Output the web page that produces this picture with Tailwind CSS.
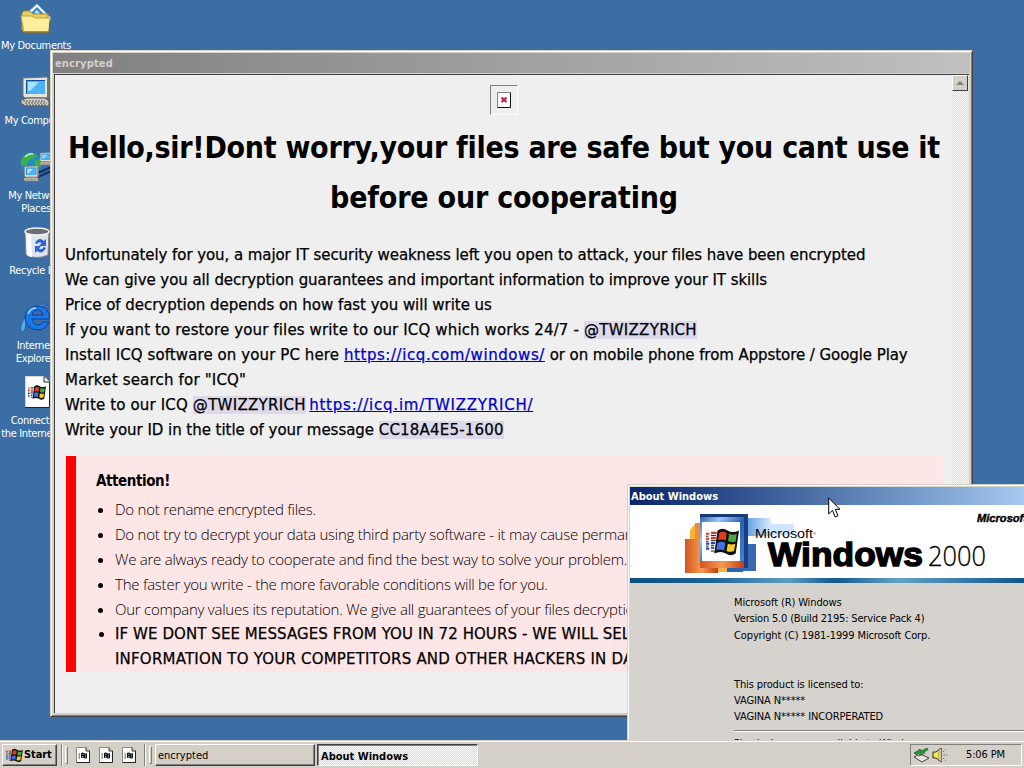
<!DOCTYPE html>
<html lang="en">
<head>
    <meta charset="UTF-8">
    <meta name="viewport" content="width=device-width, initial-scale=1.0">
    <title>Desktop</title>
    <script src="https://cdn.jsdelivr.net/npm/@tailwindcss/browser@4"></script>
    <style>
        body {
            font-family: "DejaVu Sans Condensed", "DejaVu Sans", sans-serif;
        }
        .wide {
            font-family: "DejaVu Sans", sans-serif;
        }
        /* checkerboard used by scrollbar tracks and pressed buttons */
        .dither {
            background: repeating-conic-gradient(#fff 0 25%, #dcd9d3 0 50%) 0 0 / 2px 2px;
        }
    </style>
</head>
<body class="w-[1024px] h-[768px] overflow-hidden bg-[#3a6ea5] relative text-[11px] text-black">

    <!-- Shared symbols -->
    <svg class="hidden">
        <symbol id="flag" viewBox="0 0 20 18">
            <path d="M7 2Q10 0 13 2Q16 4 20 2L18 16Q15 18 12 16Q9 14 5 16Z" fill="#111"/>
            <path d="M8 3.500Q10.500 2 12.500 3.500L12 8Q9.500 7 7.300 8Z" fill="#e03a20"/>
            <path d="M14 4Q16 5.200 18.600 4.200L18 8.700Q15.500 9.500 13.400 8.400Z" fill="#4aa848"/>
            <path d="M7 9.500Q9.500 8.200 11.700 9.500L11 14Q8.500 13 6.200 14Z" fill="#3f6fe0"/>
            <path d="M13.200 10Q15.500 11 17.800 10L17 14.500Q14.700 15.500 12.500 14.400Z" fill="#f5cc28"/>
            <path d="M0 4H2M3 3.500H6.500M0 7H2M3 6.500H6" stroke="#d04030" stroke-width="1.300"/>
            <path d="M0 10H2M3 9.500H5.500M0 13H2M3 12.500H5" stroke="#2a3fb0" stroke-width="1.300"/>
            <path d="M0 5.500H1.500M3 5H6M0 8.500H1.500M3 8H6M0 11.500H1.500M3 11H5M3 14.500H5" stroke="#111" stroke-width=".6"/>
        </symbol>
        <symbol id="page" viewBox="0 0 14 16">
            <path d="M.5.5H10L13.500 4V15.500H.5Z" fill="#fff" stroke="#8a8a86"/>
            <path d="M13.500 4V15.500H.5" fill="none" stroke="#222"/>
            <path d="M10 .5V4H13.500" fill="#ccc" stroke="#333"/>
            <path d="M5 6Q7 5 8 6T11 6V11Q9 12 8 11T5 11Z" fill="#111"/>
            <path d="M6.200 7.500H7.500M6 9.700H7.500M9 8H10M9 10H10" stroke="#ccc" stroke-width=".8"/>
            <path d="M2.500 7H4M2.500 9H4M2.500 11H4" stroke="#333"/>
        </symbol>
        <symbol id="monitor" viewBox="0 0 32 32">
            <path d="M3 2L27 1L29 3V21L26 22H5L3 20Z" fill="#e6e3da" stroke="#77756d"/>
            <path d="M27 2L29 3V21L27 22Z" fill="#77746c"/>
            <rect x="6" y="4" width="19" height="14" fill="#0b4ea0"/>
            <rect x="7" y="5" width="18" height="13" fill="#4bb4f4"/>
            <path d="M8 6H19L10 15H8Z" fill="#a5e3ff"/>
            <path d="M7 22H25L29 25V30H5L1 27V24Z" fill="#d2cfc5" stroke="#55534e"/>
            <path d="M3 25H25M5 27H27M6 29H27" stroke="#55534e" stroke-dasharray="2 1"/>
        </symbol>
    </svg>

    <!-- Desktop icons -->
    <div class="absolute left-0 top-0 w-[72px] h-[450px] text-white leading-[13px] text-center tracking-[-0.33px]">
        <div class="flex flex-col items-center h-[75px] pt-[4px]">
            <svg class="w-8 h-8" viewBox="0 0 32 32">
                <path d="M7 9L17 0L31 14L24 20Z" fill="#f3f8ff" stroke="#9fb7cc"/>
                <path d="M11 9L17 3L25 11L20 14Z" fill="#3487c8"/>
                <path d="M14 9L17 6L21 11Z" fill="#c4ecff"/>
                <path d="M2 9L4 7H10L13 10H28V28H4L2 26Z" fill="#e8cf62" stroke="#a98b2c"/>
                <path d="M1 12H12L15 14H30L29 28H4Z" fill="#fbee9c" stroke="#c0a544"/>
                <path d="M4 28H29L30 17" fill="none" stroke="#6d5a1c"/>
            </svg>
            <div class="mt-[3px]">My Documents</div>
        </div>
        <div class="flex flex-col items-center h-[75px] pt-[1px]">
            <svg class="w-8 h-8"><use href="#monitor"/></svg>
            <div class="mt-[6px]">My Computer</div>
        </div>
        <div class="flex flex-col items-center h-[75px] pt-[1px]">
            <svg class="w-8 h-8" viewBox="0 0 32 32">
                <circle cx="11" cy="12" r="10.500" fill="#1d8fc4"/>
                <path d="M3 6Q9 0 16 3L13 8L9 9L6 15L1 14Q0 10 3 6ZM14 10L21 8V15L16 17Z" fill="#3fae49"/>
                <path d="M5 6Q9 2 13 3" fill="none" stroke="#b9f0c4" stroke-width="1.500"/>
                <path d="M18 22L31 16M18 26L31 20" stroke="#122c66" stroke-width="2"/>
                <svg x="19" y="1" width="14" height="14"><use href="#monitor"/></svg>
                <svg x="3" y="14" width="17" height="18"><use href="#monitor"/></svg>
            </svg>
            <div class="mt-[6px] w-[62px]">My Network Places</div>
        </div>
        <div class="flex flex-col items-center h-[75px] pt-[1px]">
            <svg class="w-8 h-8" viewBox="0 0 32 32">
                <path d="M5 6L6 29Q17 34 28 29L29 6Z" fill="#dfe4ec" stroke="#80848c"/>
                <path d="M6 8L7 29Q9 31 12 31L11 9Z" fill="#fff"/>
                <ellipse cx="17" cy="5.500" rx="12" ry="3.500" fill="#6c6e76" stroke="#f2f2f2" stroke-width="1.500"/>
                <path d="M15 17Q19 10 24 15L26 13V20H19L21.500 17.500Q19 15 17 18ZM26 22Q22 29 17 25L15 27V20H21L19 22.500Q21 24.500 24 21Z" fill="#2b62d9"/>
            </svg>
            <div class="mt-[6px]">Recycle Bin</div>
        </div>
        <div class="flex flex-col items-center h-[75px] pt-[1px]">
            <svg class="w-8 h-8" viewBox="0 0 32 32">
                <path d="M1 30Q-1 22 9 12Q20 1 29 3Q20 4 11 13Q5 20 5 28Q3 32 1 30Z" fill="#55aef0" stroke="#1453a8" stroke-width=".7"/>
                <path d="M17 5Q29 5 30 18H12Q13 24 18 24Q21 24 23 21H29Q26 29 17 29Q6 28 5 17Q6 6 17 5ZM12 14H23Q22 9 17.500 9Q13 9 12 14Z" fill="#1878e6" stroke="#0c3d9b"/>
                <path d="M8 13Q10 7 16 7" fill="none" stroke="#7fd0ff" stroke-width="2"/>
            </svg>
            <div class="mt-[6px] mr-[2px] w-[50px]">Internet Explorer</div>
        </div>
        <div class="flex flex-col items-center h-[75px] pt-[1px]">
            <svg class="w-8 h-8" viewBox="0 0 32 32">
                <path d="M5.500.5H24L29.500 6V31.500H5.500Z" fill="#fff" stroke="#d5d5d0"/>
                <path d="M24 .5V6H29.500V31.500H5" fill="none" stroke="#222"/>
                <svg x="8" y="8" width="18" height="17"><use href="#flag"/></svg>
            </svg>
            <div class="mt-[6px] w-[72px] whitespace-nowrap">Connect to<br><span class="mr-[15px]">the Internet</span></div>
        </div>
    </div>

    <!-- Ransom note window -->
    <div class="absolute left-[50px] top-[50px] w-[923px] h-[667px] bg-[#d4d0c8] border border-[#d4d0c8] border-r-[#404040] border-b-[#404040] shadow-[inset_1px_1px_#fff,inset_-1px_-1px_#808080] p-[2px] flex flex-col">
        <div class="h-[20px] shrink-0 bg-linear-to-r from-[#808080] to-[#c0c0c0] text-[#d4d0c8] font-bold leading-[21px] pl-[2px] tracking-[0.15px]">encrypted</div>
        <div class="flex-1 min-h-0 mt-px mx-px mb-px border-t border-l border-[#404040] bg-[#efefef] flex">
            <div class="flex-1 min-w-0 wide text-[15px] leading-[25px] pl-[10px] pr-[10px]">
                <div class="flex justify-center pt-[10px]">
                    <div class="w-[28px] h-[30px] border border-[#808080] border-r-white border-b-white flex items-center justify-center">
                        <svg class="w-[14px] h-[16px]" viewBox="0 0 14 16">
                            <path d="M.5.5H13.500V15.500H.5Z" fill="#fff" stroke="#808080"/>
                            <path d="M13.500.5V15.500H.5" fill="none" stroke="#111"/>
                            <path d="M4.500 5.500L9.500 10M9.500 5.500L4.500 10" stroke="#c01840" stroke-width="2"/>
                        </svg>
                    </div>
                </div>
                <h1 class="mt-[8px] pl-px text-center text-[30px] leading-[50px] font-bold font-[DejaVu_Sans_Condensed] whitespace-nowrap tracking-[-0.28px]">Hello,sir!Dont worry,your files are safe but you cant use it<br><span class="tracking-[-0.2px]">before our cooperating</span></h1>
                <div class="mt-[20px] whitespace-nowrap tracking-[-0.073px] [-webkit-text-stroke:0.25px_currentColor]">
                    <p>Unfortunately for you, a major IT security weakness left you open to attack, your files have been encrypted</p>
                    <p>We can give you all decryption guarantees and important information to improve your IT skills</p>
                    <p class="tracking-[-0.03px]">Price of decryption depends on how fast you will write us</p>
                    <p class="tracking-[0.137px]">If you want to restore your files write to our ICQ which works 24/7 - <span class="bg-[#dcdaea] tracking-[0.3px]">@TWIZZYRICH</span></p>
                    <p><span class="tracking-[0.095px]">Install ICQ software on your PC here </span><a class="text-[#0000c8] underline tracking-[0.57px]">https://icq.com/windows/</a> or on mobile phone from Appstore / Google Play</p>
                    <p class="tracking-[0.19px]">Market search for "ICQ"</p>
                    <p class="tracking-[0.15px]">Write to our ICQ <span class="bg-[#dcdaea] tracking-[0.3px]">@TWIZZYRICH</span><span class="tracking-[-1.5px]"> </span><a class="text-[#0000c8] underline tracking-[0.77px]">https://icq.im/TWIZZYRICH/</a></p>
                    <p class="tracking-[-0.04px]">Write your ID in the title of your message <span class="bg-[#dcdaea] tracking-[0.2px]">CC18A4E5-1600</span></p>
                </div>
                <div class="mt-[13px] ml-px -mr-px h-[216px] border-l-[10px] border-[#f00] bg-[#ffe6e6] pl-[20px] pt-[13px] whitespace-nowrap overflow-hidden">
                    <p class="font-semibold font-[DejaVu_Sans_Condensed] tracking-[-0.42px]">Attention!</p>
                    <ul class="mt-[3px] list-disc pl-[19px] font-[Open_Sans] font-light marker:text-[15px] tracking-[-0.24px]">
                        <li>Do not rename encrypted files.</li>
                        <li>Do not try to decrypt your data using third party software - it may cause permanent data loss.</li>
                        <li>We are always ready to cooperate and find the best way to solve your problem.</li>
                        <li>The faster you write - the more favorable conditions will be for you.</li>
                        <li>Our company values its reputation. We give all guarantees of your files decryption.</li>
                        <li class="wide font-normal tracking-[0.08px] [-webkit-text-stroke:0.25px_currentColor]">IF WE DONT SEE MESSAGES FROM YOU IN 72 HOURS - WE WILL SELL<br><span class="tracking-[0.2px]">INFORMATION TO YOUR COMPETITORS AND OTHER HACKERS IN DARKNET</span></li>
                    </ul>
                </div>
            </div>
            <div class="w-[17px] dither">
                <div class="w-[16px] h-[16px] bg-[#d4d0c8] border border-white border-r-[#404040] border-b-[#404040] flex items-center justify-center">
                    <svg class="w-[8px] h-[4px]" viewBox="0 0 8 4"><path d="M4 0L8 4H0Z" fill="#808080"/></svg>
                </div>
            </div>
        </div>
    </div>

    <!-- About Windows -->
    <div class="absolute left-[627px] top-[484px] w-[397px] h-[256px] overflow-hidden bg-[#d6d3ce] border-t border-l border-[#d4d0c8] shadow-[inset_1px_1px_#fff] pt-[2px] pl-[2px]">
        <div class="h-[18px] bg-linear-to-r from-[#0a246a] to-[#a6caf0] text-white font-bold leading-[19px] pl-[1px]">About Windows</div>
        <svg class="block w-[394px] h-[78px]" viewBox="630 505 394 78">
            <defs>
                <linearGradient id="blue" x1="0" y1="0" x2="1" y2="1">
                    <stop offset="0" stop-color="#2458a4"/><stop offset=".25" stop-color="#9cc8f2"/>
                    <stop offset=".5" stop-color="#2c62b0"/><stop offset="1" stop-color="#4b8ad8"/>
                </linearGradient>
                <linearGradient id="orange" x1="0" y1="0" x2="1" y2="0">
                    <stop offset="0" stop-color="#d4551b"/><stop offset=".5" stop-color="#f39a55"/><stop offset="1" stop-color="#c93c10"/>
                </linearGradient>
                <linearGradient id="sky"><stop offset="0" stop-color="#6ba2e2"/><stop offset="1" stop-color="#d9ecff"/></linearGradient>
                <linearGradient id="strip">
                    <stop offset="0" stop-color="#0d4f80"/><stop offset=".2" stop-color="#1b6496"/><stop offset=".4" stop-color="#5f9cc2"/>
                    <stop offset=".52" stop-color="#12588a"/><stop offset=".68" stop-color="#64a2c8"/><stop offset="1" stop-color="#0d5688"/>
                </linearGradient>
            </defs>
            <rect x="630" y="505" width="394" height="73" fill="#fff"/>
            <rect x="630" y="578" width="394" height="5" fill="url(#strip)"/>
            <rect x="748" y="518" width="23" height="18" fill="url(#sky)"/>
            <rect x="768" y="524" width="26" height="11" fill="#cfe5fb"/>
            <rect x="738" y="544" width="18" height="27" fill="#3768b0"/>
            <path d="M690 541V530L695 524L700 530V541Z" fill="#f9b233"/>
            <rect x="695" y="523" width="8" height="20" fill="#ee8a3a"/>
            <rect x="685" y="539" width="33" height="34" fill="url(#orange)"/>
            <rect x="718" y="566" width="9" height="6" fill="#f6b540"/>
            <rect x="727" y="564" width="16" height="8" fill="#2c62b0"/>
            <rect x="700" y="514" width="48" height="54" fill="url(#blue)"/>
            <path d="M700 514H748V517H700Z" fill="#17387c"/>
            <path d="M700 561H744V568H700Z" fill="url(#orange)"/>
            <path d="M744 514H748V568H744Z" fill="#173f88"/>
            <rect x="702" y="522" width="38" height="39" fill="#fff"/>
            <svg x="706" y="527" width="33" height="30"><use href="#flag"/></svg>
            <text x="755" y="538" font-family="Liberation Sans" font-size="13.500" textLength="58" lengthAdjust="spacingAndGlyphs">Microsoft</text>
            <text x="813" y="535" font-family="Liberation Sans" font-size="4">®</text>
            <text x="768" y="566" font-family="Liberation Sans" font-weight="700" font-size="34" textLength="155" lengthAdjust="spacingAndGlyphs" stroke="#000" stroke-width="1.400">Windows</text>
            <text x="928" y="566" font-family="Open Sans" font-weight="300" font-size="28" textLength="58" lengthAdjust="spacingAndGlyphs" stroke="#000" stroke-width=".3">2000</text>
            <text x="977" y="522" font-family="Liberation Sans" font-weight="700" font-style="italic" font-size="10.500" textLength="50" lengthAdjust="spacingAndGlyphs" stroke="#000" stroke-width=".4">Microsoft</text>
        </svg>
        <div class="ml-[104px] pt-[12px] leading-[16.300px] tracking-[-0.12px] whitespace-nowrap">
            <p>Microsoft (R) Windows</p>
            <p class="tracking-[-0.18px]">Version 5.0 (Build 2195: Service Pack 4)</p>
            <p>Copyright (C) 1981-1999 Microsoft Corp.</p>
            <p class="mt-[33px]">This product is licensed to:</p>
            <p>VAGINA N*****</p>
            <p>VAGINA N***** INCORPERATED</p>
            <div class="mt-[4px] h-[2px] bg-[#808080] border-b border-white"></div>
            <p class="mt-[4px]">Physical memory available to Windows:</p>
        </div>
    </div>

    <!-- Mouse pointer -->
    <svg class="absolute left-[828px] top-[497px] w-[13px] h-[22px]" viewBox="0 0 13 22">
        <path d="M.7 1V17L4.500 13.300L7.200 20L10 18.800L7.300 12.300H12Z" fill="#fff" stroke="#000"/>
    </svg>

    <!-- Taskbar -->
    <div class="absolute left-0 top-[740px] w-full h-[28px] bg-[#d4d0c8] border-t border-[#d4d0c8] shadow-[inset_0_1px_#fff] pt-[3px] pb-[2px] pl-[2px] pr-[2px] flex">
        <div class="w-[55px] h-[22px] border border-white border-r-[#404040] border-b-[#404040] shadow-[inset_-1px_-1px_#808080] flex items-center pl-[3px] font-bold tracking-[-0.1px]">
            <svg class="w-[17px] h-[15px] mr-[1px]"><use href="#flag"/></svg>Start
        </div>
        <div class="ml-[4px] w-[2px] h-[22px] border-l border-[#808080] border-r border-r-white"></div>
        <div class="ml-[2px] w-[3px] h-[18px] mt-[2px] border border-white border-r-[#808080] border-b-[#808080]"></div>
        <div class="ml-[8px] flex gap-[9px] mt-[3px]">
            <svg class="w-[14px] h-[16px]"><use href="#page"/></svg>
            <svg class="w-[14px] h-[16px]"><use href="#page"/></svg>
            <svg class="w-[14px] h-[16px]"><use href="#page"/></svg>
        </div>
        <div class="ml-[8px] w-[2px] h-[22px] border-l border-[#808080] border-r border-r-white"></div>
        <div class="ml-[3px] w-[3px] h-[18px] mt-[2px] border border-white border-r-[#808080] border-b-[#808080]"></div>
        <div class="ml-[3px] w-[160px] h-[22px] border border-white border-r-[#404040] border-b-[#404040] shadow-[inset_-1px_-1px_#808080] leading-[21px] pl-[2px]">encrypted</div>
        <div class="ml-[2px] w-[161px] h-[22px] dither border border-[#404040] border-r-white border-b-white shadow-[inset_1px_1px_#808080] leading-[23px] pl-[3px] font-bold">About Windows</div>
        <div class="ml-auto w-[112px] h-[22px] border border-[#808080] border-r-white border-b-white flex items-center pl-[2px]">
            <svg class="w-[17px] h-[16px]" viewBox="0 0 17 16">
                <path d="M1 10L7 7L16 11L9 15Z" fill="#e8e8e4" stroke="#444"/>
                <path d="M1 6L7 3L12 6L6 9Z" fill="#c9ccd0" stroke="#555"/>
                <path d="M14 1L8 4L7 2L2 6L9 8L8.500 6L15 3Z" fill="#1da035" stroke="#0b5c1b" stroke-width=".6"/>
            </svg>
            <svg class="w-[17px] h-[16px] ml-[2px]" viewBox="0 0 17 16">
                <path d="M1 5H4L9 1V15L4 11H1Z" fill="#f4ec4e" stroke="#333"/>
                <path d="M7 3L9 1V15L7 13Z" fill="#fffbd0" stroke="#333" stroke-width=".5"/>
                <path d="M11 5L14 2M11.500 8H16M11 11L14 14" stroke="#777" stroke-dasharray="1.500 1"/>
            </svg>
            <span class="ml-auto mr-[16px] tracking-[-0.12px]">5:06 PM</span>
        </div>
    </div>
</body>
</html>
